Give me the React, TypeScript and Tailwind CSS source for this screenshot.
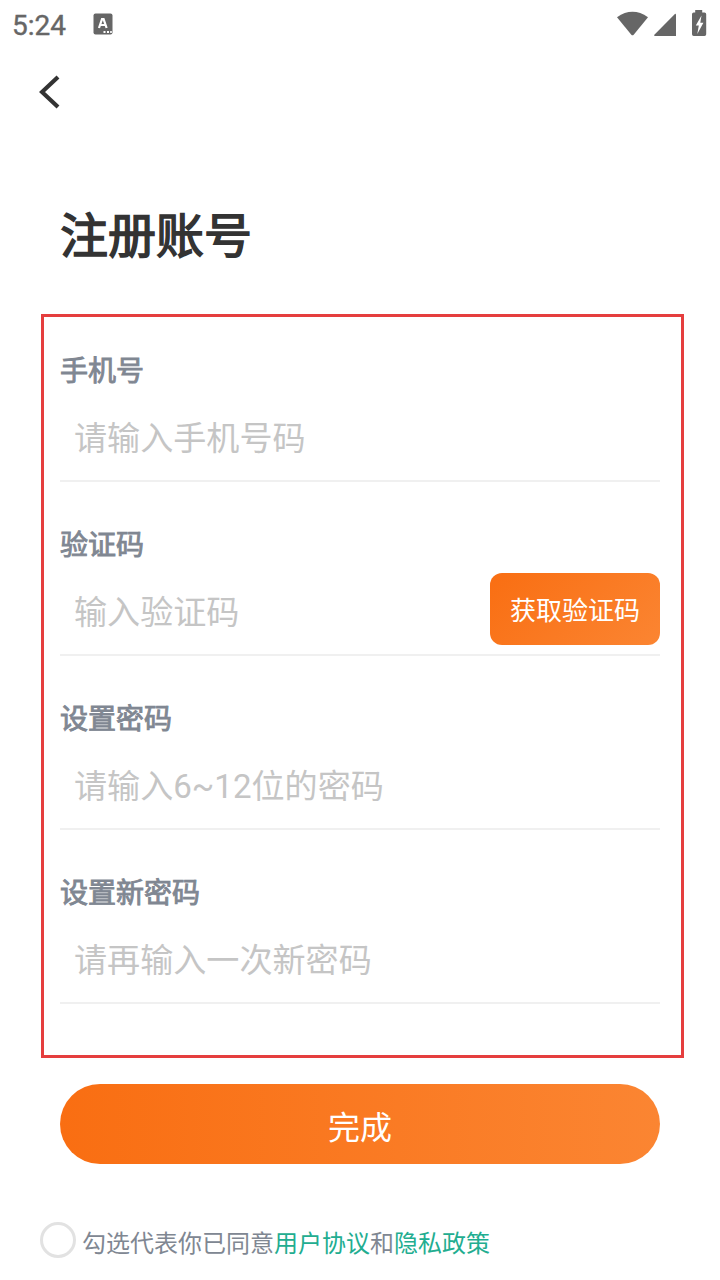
import React from "react";

function StatusBar() {
  return (
    <header className="flex h-12 items-center justify-between pl-[12px] pr-[13px] text-[#666666]">
      <div className="flex items-center">
        <span className="w-[81px] pt-[4px] text-[28px] leading-[44px] [-webkit-text-stroke:0.4px_#666666]">5:24</span>
        <svg width="20" height="22" viewBox="0 0 20 22" className="block">
          <rect x="0.5" y="0.5" width="19" height="21" rx="2" fill="#666666" />
          <path d="M6 15 L9 6.2 H10.6 L13.6 15 M7.2 12 H12.4" fill="none" stroke="#fff" strokeWidth="2.2" />
          <path d="M10.5 19h2M14 19h2M17.2 19h1.6" stroke="#fff" strokeWidth="1.8" />
        </svg>
      </div>
      <svg width="90" height="28" viewBox="617 10 90 28" fill="#666666" className="block">
        <path d="M617 17.2 Q632.5 6.5 648 17.2 L633.7 34.7 Q632.5 36 631.3 34.7 Z" />
        <path d="M676 15.2 V36 H655.2 Q653.2 36 654.6 34.6 L674.4 14.4 Q676 13 676 15.2 Z" />
        <path
          fillRule="evenodd"
          d="M695.2 10h7v2.6h2.3q1.7 0 1.7 1.7v20q0 1.7-1.7 1.7h-10.8q-1.7 0-1.7-1.7v-20q0-1.7 1.7-1.7h1.5z M701.5 15.5 L695.8 25.5 H698.8 L697.3 34 L703.4 22.8 H700.3 Z"
        />
      </svg>
    </header>
  );
}

interface FieldProps {
  label: string;
  placeholder: string;
  action?: React.ReactNode;
}

function Field({ label, placeholder, action }: FieldProps) {
  return (
    <div className="mb-8 border-b-2 border-[#f0f0f0]">
      <div className="h-[60px] text-[28px] leading-[64px] text-[#808792] [-webkit-text-stroke:0.9px_#808792]">{label}</div>
      <div className="flex h-20 items-center justify-between">
        <span className="pb-[2px] pl-[14px] text-[33.1px] leading-[76px] text-[#c5c5c5]">{placeholder}</span>
        {action}
      </div>
    </div>
  );
}

export default function App() {
  return (
    <main className="flex h-[1280px] w-[720px] flex-col overflow-hidden bg-white font-['Roboto','Noto_Sans_CJK_SC',sans-serif]">
      <StatusBar />
      <nav className="flex h-[88px] items-center pl-[39px]">
        <svg width="22" height="34" viewBox="0 0 22 34" fill="none" className="block">
          <path d="M19 2 L3 17 L19 32" stroke="#333333" strokeWidth="4.2" />
        </svg>
      </nav>
      <h1 className="mt-[60px] h-[80px] pl-[60px] text-[48px] leading-[82px] text-[#333333] [-webkit-text-stroke:1.5px_#333333]">
        注册账号
      </h1>
      <section className="ml-[41px] mt-[38px] h-[744px] w-[643px] shrink-0 border-[3px] border-[#e53e3e] pl-4 pr-[21px] pt-[23px]">
        <Field label="手机号" placeholder="请输入手机号码" />
        <Field
          label="验证码"
          placeholder="输入验证码"
          action={
            <button className="mb-[10px] h-[72px] w-[170px] rounded-xl bg-[linear-gradient(135deg,#f96e12,#fb8532)] pt-[4px] text-[26px] leading-[68px] text-white">
              获取验证码
            </button>
          }
        />
        <Field label="设置密码" placeholder="请输入6~12位的密码" />
        <Field label="设置新密码" placeholder="请再输入一次新密码" />
      </section>
      <button className="ml-[60px] mt-[26px] h-20 w-[600px] shrink-0 rounded-full bg-[linear-gradient(90deg,#f96e12,#fb8532)] pt-[8px] text-[32px] leading-[72px] text-white">
        完成
      </button>
      <footer className="mt-[58px] flex h-9 items-center pl-10 text-[24px] text-[#808792]">
        <span className="h-9 w-9 rounded-full border-[3px] border-[#e2e2e2]" />
        <p className="ml-[6px] pt-2 leading-9">
          勾选代表你已同意<a className="text-[#22ad90]">用户协议</a>和<a className="text-[#22ad90]">隐私政策</a>
        </p>
      </footer>
    </main>
  );
}
